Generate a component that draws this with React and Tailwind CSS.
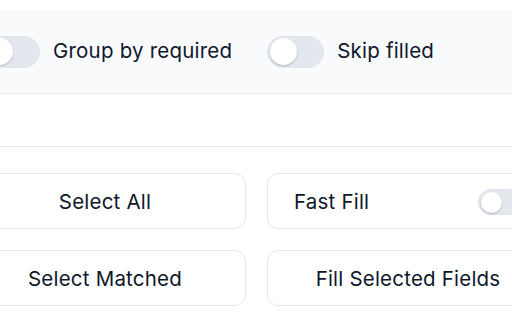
import { useState } from "react";

function Toggle({ on, onChange, size = "lg" }) {
  const big = size === "lg";
  return (
    <button
      onClick={() => onChange(!on)}
      className={`relative shrink-0 rounded-full border border-[#dfe4ec] ${
        on ? "bg-[#3b82f6]" : "bg-[#e3e8ef]"
      } ${big ? "w-[57px] h-[32px]" : "w-[44px] h-[26px]"}`}
    >
      <span
        className={`absolute top-[1.5px] rounded-full bg-white shadow-[0_1px_2px_rgba(15,23,42,0.25)] ${
          big ? "w-[27px] h-[27px]" : "w-[21px] h-[21px]"
        } ${on ? (big ? "left-[27px]" : "left-[20px]") : "left-[1.5px]"}`}
      />
    </button>
  );
}

export default function App() {
  const [group, setGroup] = useState(false);
  const [skip, setSkip] = useState(false);
  const [fast, setFast] = useState(false);

  return (
    <div
      className="w-[512px] h-[320px] overflow-hidden bg-white text-[#0f172a]"
      style={{ fontFamily: "Inter, 'Noto Sans', sans-serif" }}
    >
      <div className="ml-[-36px] w-[584px] pt-[10px] text-[20.5px] tracking-[0.01em]">
        {/* options bar */}
        <div className="h-[84px] bg-[#f8fafc] border-b border-[#e2e6ee] flex items-center pl-[19px]">
          <div className="flex items-center gap-[13px]">
            <Toggle on={group} onChange={setGroup} />
            <span>Group by required</span>
          </div>
          <div className="flex items-center gap-[13px] ml-[35px]">
            <Toggle on={skip} onChange={setSkip} />
            <span>Skip filled</span>
          </div>
        </div>

        {/* empty section */}
        <div className="h-[53px] border-b border-[#e2e6ee]" />

        {/* actions */}
        <div className="pt-[26px] grid grid-cols-[282px_282px] gap-[21px]">
          <button className="h-[56px] pt-[2px] rounded-[11px] border border-[#e2e6ee] bg-white">
            Select All
          </button>
          <div className="h-[56px] pt-[2px] rounded-[11px] border border-[#e2e6ee] bg-white flex items-center justify-between px-[26px]">
            <span>Fast Fill</span>
            <Toggle on={fast} onChange={setFast} size="sm" />
          </div>
          <button className="h-[56px] pt-[2px] rounded-[11px] border border-[#e2e6ee] bg-white">
            Select Matched
          </button>
          <button className="h-[56px] pt-[2px] rounded-[11px] border border-[#e2e6ee] bg-white">
            Fill Selected Fields
          </button>
        </div>
      </div>
    </div>
  );
}
